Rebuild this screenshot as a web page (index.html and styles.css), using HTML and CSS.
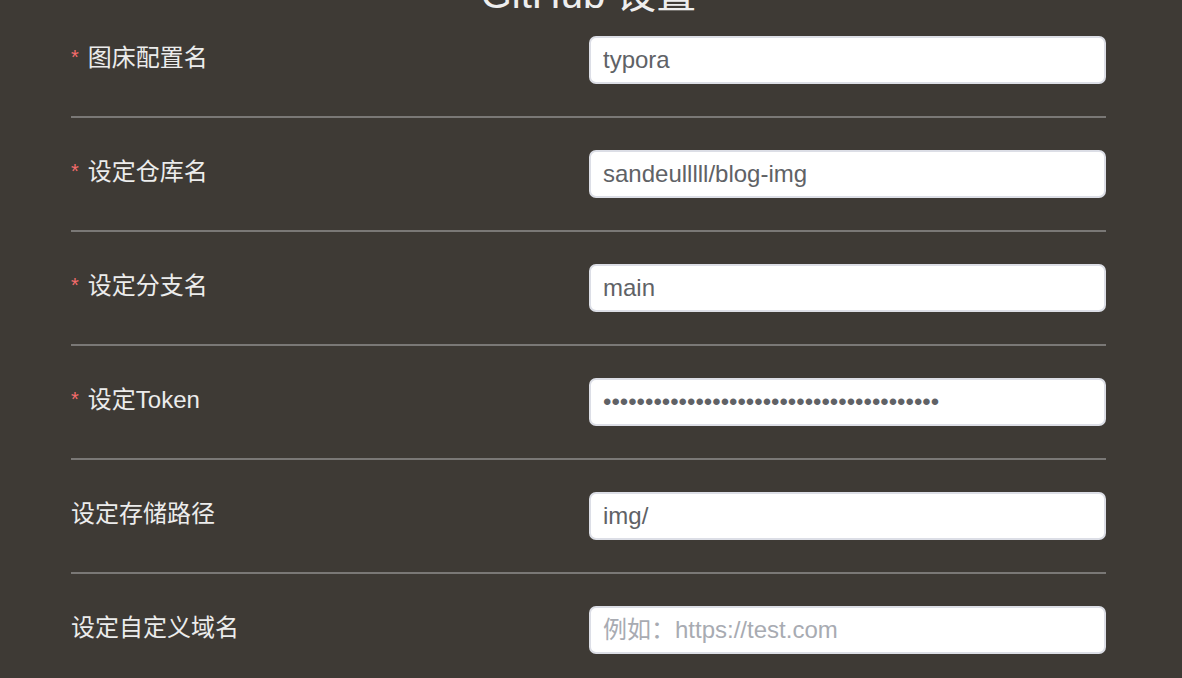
FILE: index.html
```html
<!DOCTYPE html>
<html lang="zh-CN">
<head>
<meta charset="utf-8">
<title>GitHub 设置</title>
<link rel="stylesheet" href="styles.css">
</head>
<body>
<div class="page">
  <h2 class="title">GitHub 设置</h2>
  <form class="form">
    <div class="row">
      <label class="label required">图床配置名</label>
      <input class="field" type="text" value="typora">
    </div>
    <div class="row">
      <label class="label required">设定仓库名</label>
      <input class="field" type="text" value="sandeulllll/blog-img">
    </div>
    <div class="row">
      <label class="label required">设定分支名</label>
      <input class="field" type="text" value="main">
    </div>
    <div class="row">
      <label class="label required">设定Token</label>
      <input class="field" type="password" value="ghp_0123456789abcdefghijklmnopqrstuvwxyz">
    </div>
    <div class="row">
      <label class="label">设定存储路径</label>
      <input class="field" type="text" value="img/">
    </div>
    <div class="row">
      <label class="label">设定自定义域名</label>
      <input class="field" type="text" placeholder="例如：https://test.com">
    </div>
  </form>
</div>
</body>
</html>
```
FILE: styles.css
```css
html, body {
  margin: 0;
  padding: 0;
  background: #3e3a35;
  overflow: hidden;
}
body {
  font-family: "Liberation Sans", "Noto Sans CJK SC", sans-serif;
  color: #ececec;
}
.page {
  padding: 0 76px 0 71px;
}
.title {
  margin: -21px 0 -5px;
  font-size: 40px;
  font-weight: normal;
  line-height: 30px;
  text-align: center;
  color: #eeeeee;
}
.form {
  display: flex;
  flex-direction: column;
}
.row {
  display: flex;
  align-items: center;
  padding: 32px 0;
  border-bottom: 2px solid #7a7876;
}
.label {
  flex: 1;
  font-size: 24px;
  line-height: 30px;
  color: #ececec;
  margin-top: -4px;
}
.label.required::before {
  content: "*";
  color: #f56c6c;
  font-size: 20px;
  margin-right: 9px;
  position: relative;
  top: -2px;
}
.field {
  width: 517px;
  height: 48px;
  box-sizing: border-box;
  border: 2px solid #dcdee6;
  border-radius: 7px;
  background: #ffffff;
  padding: 0 12px;
  font-family: "Liberation Sans", "Noto Sans CJK SC", sans-serif;
  font-size: 24px;
  color: #606266;
  outline: none;
}
.field::placeholder {
  color: #a8abb2;
}
```
